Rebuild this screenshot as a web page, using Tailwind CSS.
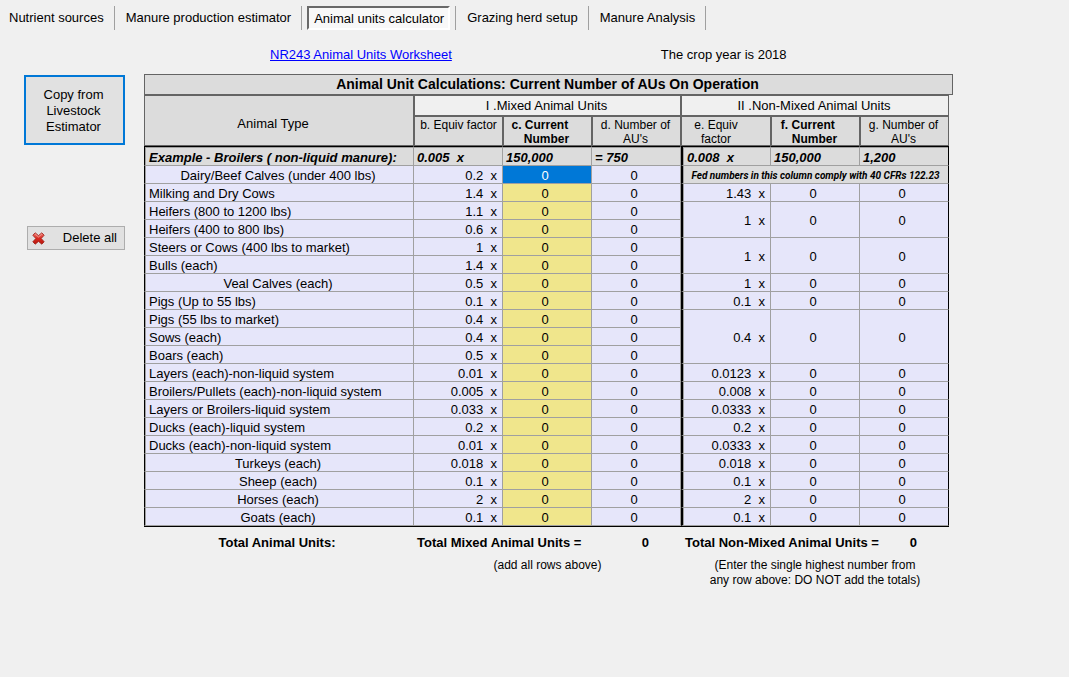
<!DOCTYPE html>
<html lang="en">
<head>
<meta charset="utf-8">
<title>Animal units calculator</title>
<script src="https://cdn.jsdelivr.net/npm/@tailwindcss/browser@4"></script>
</head>
<body class="min-h-screen bg-[#f0f0f0] font-['Liberation_Sans',Arial,sans-serif] text-[13px] leading-4 text-black">

<nav role="tablist" class="flex pt-1.5">
  <button role="tab" aria-selected="false" class="h-6 border-r border-[#a0a0a0] pr-2.5 pl-[9px]">Nutrient sources</button>
  <button role="tab" aria-selected="false" class="h-6 border-r border-[#a0a0a0] pr-2.5 pl-[11px]">Manure production estimator</button>
  <div class="border-r border-[#a0a0a0] px-[5px]">
    <button role="tab" aria-selected="true" class="h-6 border-2 border-t-[#696969] border-r-white border-b-white border-l-[#696969] bg-[#f8f8f8] pt-px pr-1 pl-[5px]">Animal units calculator</button>
  </div>
  <button role="tab" aria-selected="false" class="h-6 border-r border-[#a0a0a0] pr-2.5 pl-[11px]">Grazing herd setup</button>
  <button role="tab" aria-selected="false" class="h-6 border-r border-[#a0a0a0] pr-2.5 pl-[11px]">Manure Analysis</button>
</nav>

<div class="flex gap-[209px] pt-[17px] pb-[11px] pl-[270px]">
  <a href="#worksheet" class="text-[#0000ff] underline">NR243 Animal Units Worksheet</a>
  <p>The crop year is 2018</p>
</div>

<div class="flex">
  <aside class="flex w-36 shrink-0 flex-col items-start gap-[81px] pt-px pl-6">
    <button class="h-[70px] w-[101px] border-2 border-[#0078d7] bg-[#e1e1e1] pt-0.5 pr-3.5 pl-3 leading-4">Copy from Livestock Estimator</button>
    <button class="ml-[3px] flex h-6 w-[98px] items-center justify-between border border-[#adadad] bg-[#e1e1e1] pr-[7px] pl-1">
      <svg class="size-[13px]" viewBox="0 0 13 13" aria-hidden="true">
        <defs><linearGradient id="red" x1="0" y1="0" x2="0" y2="1"><stop offset="0" stop-color="#f08078"/><stop offset=".5" stop-color="#d8281e"/><stop offset="1" stop-color="#b81810"/></linearGradient></defs>
        <path d="M3.2.8 6.5 3.6 9.8.8l2.4 2.4-3 3.3 3 3.3-2.4 2.4-3.3-2.8-3.3 2.8L.8 9.8l3-3.3-3-3.3z" fill="url(#red)" stroke="#9c2018" stroke-width=".8" stroke-linejoin="round"/>
        <path d="m3.2 2 3.3 3L9.8 2" fill="none" stroke="#f8b8b0" stroke-width=".7"/>
      </svg>
      <span>Delete all</span>
    </button>
  </aside>

  <main class="mr-[116px] min-w-0 flex-1">
    <h1 class="h-[21px] border border-[#646464] bg-[#dcdcdc] pr-0.5 text-center text-[14px] leading-[19px] font-bold">Animal Unit Calculations: Current Number of AUs On Operation</h1>
    <div class="mr-1">
      <table class="w-full table-fixed border-separate border-spacing-0 border-b border-black">
        <colgroup>
          <col class="w-[270px]"><col class="w-[89px]"><col class="w-[89px]"><col class="w-[89px]"><col class="w-[90px]"><col class="w-[89px]"><col class="w-[89px]">
        </colgroup>
        <thead class="bg-[#dcdcdc]">
          <tr class="h-[21px]">
            <th scope="col" rowspan="2" class="border border-[#646464] pt-1.5 pr-3 font-normal">Animal Type</th>
            <th scope="colgroup" colspan="3" class="border border-[#646464] bg-[#f0f0f0] p-0 pt-px pr-0.5 text-center leading-[18px] font-normal">I .Mixed Animal Units</th>
            <th scope="colgroup" colspan="3" class="border border-[#646464] bg-[#f0f0f0] p-0 pt-px pr-0.5 text-center leading-[18px] font-normal">II .Non-Mixed Animal Units</th>
          </tr>
          <tr class="h-[30px] align-top text-[12px] leading-[14px]">
            <th scope="col" class="border-x border-[#646464] p-0 pt-0.5 font-normal shadow-[inset_0_1px_#646464,inset_0_-1px_#646464]">b. Equiv factor</th>
            <th scope="col" class="border-x border-[#646464] p-0 pt-0.5 pr-0.5 font-bold shadow-[inset_0_1px_#646464,inset_0_-1px_#646464]">c. Current&nbsp;&nbsp;&nbsp;&nbsp;<br>Number</th>
            <th scope="col" class="border-x border-[#646464] p-0 pt-0.5 pr-0.5 font-normal shadow-[inset_0_1px_#646464,inset_0_-1px_#646464]">d. Number of<br>AU's</th>
            <th scope="col" class="border-x border-[#646464] p-0 pt-0.5 pr-5 font-normal shadow-[inset_0_1px_#646464,inset_0_-1px_#646464]">e. Equiv<br>factor</th>
            <th scope="col" class="border-x border-[#646464] p-0 pt-0.5 pr-0.5 font-bold shadow-[inset_0_1px_#646464,inset_0_-1px_#646464]">f. Current&nbsp;&nbsp;&nbsp;&nbsp;<br>Number</th>
            <th scope="col" class="border-x border-[#646464] p-0 pt-0.5 pr-0.5 font-normal shadow-[inset_0_1px_#646464,inset_0_-1px_#646464]">g. Number of<br>AU's</th>
          </tr>
        </thead>
        <tbody id="rows" class="bg-[#e6e6fa]">
          <tr class="h-5 bg-[#dcdcdc] leading-[15px] font-bold italic">
            <td class="border border-t-black border-r-[#a0a0a0] border-b-[#a0a0a0] border-l-black p-0 pt-[3px] pl-1 shadow-[inset_1px_1px_#a0a0a0]">Example - Broilers ( non-liquid manure):</td>
            <td class="border-t border-r border-b border-t-black border-r-[#a0a0a0] border-b-[#a0a0a0] p-0 pt-[3px] pl-[3px] shadow-[inset_0_1px_#a0a0a0]">0.005&nbsp; x</td>
            <td class="border-t border-r border-b border-t-black border-r-[#a0a0a0] border-b-[#a0a0a0] p-0 pt-[3px] pl-[3px] shadow-[inset_0_1px_#a0a0a0]">150,000</td>
            <td class="border-t border-r border-b border-t-black border-r-[#a0a0a0] border-b-[#a0a0a0] p-0 pt-[3px] pl-[3px] shadow-[inset_0_1px_#a0a0a0]">= 750</td>
            <td class="border-t border-r border-b border-l-2 border-t-black border-r-[#a0a0a0] border-b-[#a0a0a0] border-l-black p-0 pt-[3px] pl-1 shadow-[inset_1px_1px_#a0a0a0]">0.008&nbsp; x</td>
            <td class="border-t border-r border-b border-t-black border-r-[#a0a0a0] border-b-[#a0a0a0] p-0 pt-[3px] pl-[3px] shadow-[inset_0_1px_#a0a0a0]">150,000</td>
            <td class="border-t border-r border-b border-t-black border-r-black border-b-[#a0a0a0] p-0 pt-[3px] pl-[3px] shadow-[inset_0_1px_#a0a0a0]">1,200</td>
          </tr>
        </tbody>
      </table>

      <div class="grid grid-cols-[270fr_267fr_268fr] pt-2">
        <p class="pr-1 text-center font-bold">Total Animal Units:</p>
        <div>
          <p class="flex justify-between pr-8 pl-[3px] font-bold"><span>Total Mixed Animal Units =</span><output>0</output></p>
          <p class="mt-[7px] text-center text-[12px] leading-[15px]">(add all rows above)</p>
        </div>
        <div>
          <p class="flex justify-between pr-8 pl-1 font-bold"><span>Total Non-Mixed Animal Units =</span><output>0</output></p>
          <p class="mt-[7px] text-center text-[12px] leading-[15px]">(Enter the single highest number from<br>any row above: DO NOT add the totals)</p>
        </div>
      </div>
    </div>
  </main>
</div>

<script>
  // name, centred name, mixed factor, non-mixed factor (null = inside the span above), rows spanned
  const animals = [
    ["Dairy/Beef Calves (under 400 lbs)", true, "0.2", "note", 1],
    ["Milking and Dry Cows", false, "1.4", "1.43", 1],
    ["Heifers (800 to 1200 lbs)", false, "1.1", "1", 2],
    ["Heifers (400 to 800 lbs)", false, "0.6", null, 0],
    ["Steers or Cows (400 lbs to market)", false, "1", "1", 2],
    ["Bulls (each)", false, "1.4", null, 0],
    ["Veal Calves (each)", true, "0.5", "1", 1],
    ["Pigs (Up to 55 lbs)", false, "0.1", "0.1", 1],
    ["Pigs (55 lbs to market)", false, "0.4", "0.4", 3],
    ["Sows (each)", false, "0.4", null, 0],
    ["Boars (each)", false, "0.5", null, 0],
    ["Layers (each)-non-liquid system", false, "0.01", "0.0123", 1],
    ["Broilers/Pullets (each)-non-liquid system", false, "0.005", "0.008", 1],
    ["Layers or Broilers-liquid system", false, "0.033", "0.0333", 1],
    ["Ducks (each)-liquid system", false, "0.2", "0.2", 1],
    ["Ducks (each)-non-liquid system", false, "0.01", "0.0333", 1],
    ["Turkeys (each)", true, "0.018", "0.018", 1],
    ["Sheep (each)", true, "0.1", "0.1", 1],
    ["Horses (each)", true, "2", "2", 1],
    ["Goats (each)", true, "0.1", "0.1", 1]
  ];
  const html = animals.map(([name, centred, mixed, other, span], i) => {
    const nameClass = centred ? "pr-0.5 text-center" : "pl-1 text-left";
    const inputClass = i === 0 ? "bg-[#0078d7] text-white" : "bg-[#f0e68c]";
    let right = "";
    if (other === "note") {
      right = `<td colspan="3" class="border-r border-b border-l-2 border-r-black border-b-[#a0a0a0] border-l-black bg-[#dcdcdc] p-0 pt-0.5 text-center font-[Roboto,sans-serif] text-[10px] font-bold whitespace-nowrap italic shadow-[inset_1px_0_#a0a0a0]">Fed numbers in this column comply with 40 CFRs 122.23</td>`;
    } else if (other !== null) {
      right = `<td rowspan="${span}" class="border-r border-b border-l-2 border-r-[#a0a0a0] border-b-[#a0a0a0] border-l-black p-0 pt-0.5 pr-[5px] text-right shadow-[inset_1px_0_#a0a0a0]">${other}&nbsp; x</td>
        <td rowspan="${span}" class="border-r border-b border-[#a0a0a0] p-0 pt-0.5 pr-1 text-center">0</td>
        <td rowspan="${span}" class="border-r border-b border-r-black border-b-[#a0a0a0] p-0 pt-0.5 pr-1 text-center">0</td>`;
    }
    return `<tr class="h-[18px] leading-[15px]">
      <th scope="row" class="border-x border-b border-r-[#a0a0a0] border-b-[#a0a0a0] border-l-black p-0 pt-0.5 font-normal shadow-[inset_1px_0_#a0a0a0] ${nameClass}"><label for="n${i}">${name}</label></th>
      <td class="border-r border-b border-[#a0a0a0] p-0 pt-0.5 pr-[5px] text-right">${mixed}&nbsp; x</td>
      <td class="border-r border-b border-[#a0a0a0] p-0"><input id="n${i}" type="text" value="0" class="block h-[17px] w-full pt-0.5 pr-1 text-center ${inputClass}"></td>
      <td class="border-r border-b border-[#a0a0a0] p-0 pt-0.5 pr-1 text-center">0</td>${right}</tr>`;
  }).join("");
  document.getElementById("rows").insertAdjacentHTML("beforeend", html);
</script>
</body>
</html>
